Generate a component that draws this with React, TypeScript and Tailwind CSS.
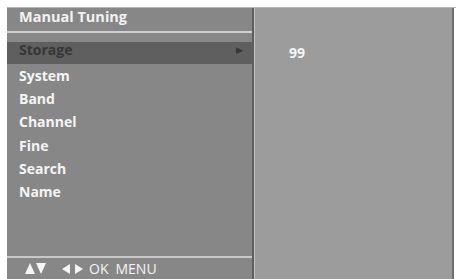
import React from 'react';

const items = ['System', 'Band', 'Channel', 'Fine', 'Search', 'Name'];

const App: React.FC = () => {
  return (
    <div
      className="w-[456px] h-[279px] bg-white pl-[7px] pt-[7px] overflow-hidden"
      style={{ fontFamily: '"Open Sans", "DejaVu Sans", sans-serif' }}
    >
      <div className="flex h-[272px] border-t border-[#b5b5b5]">
        {/* Left - menu */}
        <div className="w-[247px] flex flex-col bg-[#878787] border-r-2 border-[#5e5e5e]">
          <div className="h-[23px] pl-[12px] text-[14.5px] font-bold text-[#f2f2f2] leading-[17px]">
            Manual Tuning
          </div>
          <div className="h-[2px] bg-[#d0d0d0]" />
          <div className="mt-[9px] h-[22px] bg-[#5f5f5f] flex items-start justify-between pl-[12px] pr-[9px]">
            <span className="text-[14px] font-bold text-[#363636] leading-[14px] pt-[1px]">Storage</span>
            <span className="text-[9px] text-[#363636] leading-[14px] pt-[1px]">▶</span>
          </div>
          <div className="flex flex-col pl-[12px]">
            {items.map((it) => (
              <div key={it} className="h-[23.2px] leading-[23.2px] text-[14px] font-bold text-[#f5f5f5]">
                {it}
              </div>
            ))}
          </div>
          <div className="flex-1" />
          <div className="h-[2px] bg-[#c8c8c8]" />
          <div className="h-[21px] flex items-center pl-[18px] text-[14px] text-[#f5f5f5]">
            <svg width="21" height="11" viewBox="0 0 21 11" className="fill-[#f5f5f5]">
              <polygon points="0,11 5,0 10,11" />
              <polygon points="11,0 21,0 16,11" />
            </svg>
            <svg width="21" height="10" viewBox="0 0 21 10" className="ml-[16px] fill-[#f5f5f5]">
              <polygon points="0,5 8,0 8,10" />
              <polygon points="13,0 21,5 13,10" />
            </svg>
            <span className="ml-[6px]">OK</span>
            <span className="ml-[7px]">MENU</span>
          </div>
        </div>
        {/* Right - value */}
        <div className="w-[200px] bg-[#9c9c9c] border-l border-[#c4c4c4] border-r-2 border-r-[#6e6e6e] pt-[32px] pl-[34px]">
          <span className="text-[14px] font-bold text-[#f5f5f5]">99</span>
        </div>
      </div>
    </div>
  );
};

export default App;
